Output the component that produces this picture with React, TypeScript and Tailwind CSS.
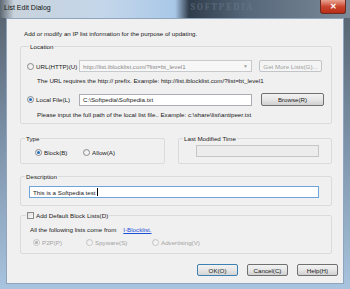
import React from 'react'

type RadioProps = {
  checked?: boolean
  disabled?: boolean
  label: string
}

function Radio({ checked, disabled, label }: RadioProps) {
  return (
    <div className="flex items-center gap-[2px] whitespace-nowrap">
      <span
        className={`flex h-[7px] w-[7px] shrink-0 items-center justify-center rounded-full border bg-gradient-to-br from-[#e6e6e6] to-[#fdfdfd] ${
          disabled ? 'border-[#c4c4c4]' : 'border-[#8a8a8a]'
        }`}
      >
        {checked && (
          <span
            className={`h-[3px] w-[3px] rounded-full ${disabled ? 'bg-[#b0b0b0]' : 'bg-[#1f6fc0]'}`}
          />
        )}
      </span>
      <span className={disabled ? 'text-[#a3a3a3]' : 'text-[#1a1a1a]'}>{label}</span>
    </div>
  )
}

function Button({ label, primary, disabled, className }: { label: string; primary?: boolean; disabled?: boolean; className: string }) {
  return (
    <div
      className={`flex items-center justify-center whitespace-nowrap rounded-[2px] border ${
        disabled
          ? 'border-[#c2c5c8] bg-[#f4f4f4] text-[#a0a0a0]'
          : primary
            ? 'border-[#3c7fb1] bg-gradient-to-b from-[#f2f2f2] via-[#e6e6e6] to-[#d4d4d4] text-[#1a1a1a]'
            : 'border-[#707070] bg-gradient-to-b from-[#f2f2f2] via-[#e6e6e6] to-[#d0d0d0] text-[#1a1a1a]'
      } ${className}`}
    >
      {label}
    </div>
  )
}

function App() {
  return (
    <div
      className="flex h-[289px] w-[350px] flex-col overflow-hidden whitespace-nowrap bg-gradient-to-b from-[#55606c] via-[#7d93aa] to-[#a9c4df] text-[6.2px] leading-[9px] text-[#1a1a1a]"
      style={{ fontFamily: '"Liberation Sans", Arial, sans-serif' }}
    >
      {/* Title bar */}
      <div className="flex h-[18px] shrink-0 items-start bg-[linear-gradient(90deg,#5d6772_0%,#c9d3dc_4%,#c3d6ea_30%,#a9c8e8_50%,#2f3c4a_54%,#56677a_70%,#6f7e8e_90%,#7c8a99_100%)]">
        <span className="ml-[4px] mt-[3px] text-[7px] text-[#111]">List Edit Dialog</span>
        <span className="ml-[140px] mt-[3px] font-serif text-[9px] font-bold tracking-[2px] text-[#6d7d8e] opacity-50">SOFTPEDIA</span>
        <div className="ml-auto mr-[4px] flex h-[14px] w-[26px] items-center justify-center rounded-b-[3px] border border-t-0 border-[#6b2a22] bg-gradient-to-b from-[#e8a393] via-[#c9462f] to-[#b82c17] text-[8px] font-bold text-white">
          ✕
        </div>
      </div>

      {/* Client area */}
      <div className="mx-[6px] mb-[5px] flex flex-1 flex-col border border-[#8ea5bd] bg-[#f0f0f0] pt-[10px] pl-[13px] pr-[5px]">
        <div className="mr-[6px] flex flex-col">
          <p className="ml-[4px]">Add or modify an IP list information for the purpose of updating.</p>

          {/* Location */}
          <fieldset className="mt-[4px] rounded-[2px] border border-[#d8dcdf] pb-[4px] pl-[6px]">
            <legend className="ml-[2px] px-[1px]">Location</legend>
            <div className="mt-[9px] flex h-[12px] items-center">
              <div className="w-[52px]">
                <Radio label="URL(HTTP)(U)" />
              </div>
              <div className="flex h-[12px] w-[173px] items-center justify-between border border-[#c7cacd] bg-[#f7f7f7] pl-[3px] pr-[3px] text-[#8a8a8a]">
                <span>http://list.iblocklist.com/?list=bt_level1</span>
                <span className="text-[5px] text-[#a0a0a0]">▼</span>
              </div>
              <Button label="Get More Lists(G)..." disabled className="ml-[7px] h-[12px] w-[63px]" />
            </div>
            <p className="ml-[10px] mt-[4px]">The URL requires the http:// prefix. Example: http://list.iblocklist.com/?list=bt_level1</p>
            <div className="mt-[8px] flex h-[13px] items-center">
              <div className="w-[52px]">
                <Radio checked label="Local File(L)" />
              </div>
              <div className="flex h-[12px] w-[173px] items-center border border-[#abadb3] bg-white pl-[3px]">
                C:\Softpedia\Softpedia.txt
              </div>
              <Button label="Browse(R)" className="ml-[9px] h-[13px] w-[63px]" />
            </div>
            <p className="ml-[10px] mt-[4px]">Please input the full path of the local list file.. Example: c:\share\list\antipeer.txt</p>
          </fieldset>

          {/* Type / Last Modified */}
          <div className="mt-[10px] flex gap-[13px]">
            <fieldset className="w-[145px] rounded-[2px] border border-[#d8dcdf] pb-[6px] pl-[14px]">
              <legend className="-ml-[10px] px-[1px]">Type</legend>
              <div className="mt-[5px] flex">
                <div className="w-[48px]">
                  <Radio checked label="Block(B)" />
                </div>
                <Radio label="Allow(A)" />
              </div>
            </fieldset>
            <fieldset className="flex-1 rounded-[2px] border border-[#d8dcdf] pb-[5px] pl-[17px]">
              <legend className="-ml-[13px] px-[1px]">Last Modified Time</legend>
              <div className="mt-[2px] h-[12px] w-[123px] border border-[#c4c6c8] bg-[#ececec]" />
            </fieldset>
          </div>

          {/* Description */}
          <fieldset className="mt-[8px] rounded-[2px] border border-[#d8dcdf] pb-[7px] pl-[8px]">
            <legend className="-ml-[4px] px-[1px]">Description</legend>
            <div className="mt-[5px] flex h-[12px] w-[290px] items-center border border-[#6ea5d8] bg-white pl-[3px]">
              This is a Softpedia test<span className="ml-[1px] h-[8px] w-px bg-black" />
            </div>
          </fieldset>

          {/* Default block lists */}
          <fieldset className="mt-[5px] rounded-[2px] border border-[#d8dcdf] pb-[6px] pl-[9px]">
            <legend className="-ml-[4px] flex items-center gap-[2px] px-[1px]">
              <span className="h-[7px] w-[7px] border border-[#8a8a8a] bg-gradient-to-br from-[#dcdcdc] to-[#fbfbfb]" />
              <span>Add Default Block Lists(D)</span>
            </legend>
            <p className="mt-[5px]">
              All the following lists come from
              <span className="ml-[7px] text-[#1a4fd8] underline">I-Blocklist.</span>
            </p>
            <div className="mt-[4px] flex pl-[3px]">
              <div className="w-[53px]">
                <Radio checked disabled label="P2P(P)" />
              </div>
              <div className="w-[66px]">
                <Radio disabled label="Spyware(S)" />
              </div>
              <Radio disabled label="Advertising(V)" />
            </div>
          </fieldset>
        </div>

        {/* Buttons */}
        <div className="mt-[10px] flex justify-end gap-[9px]">
          <Button label="OK(O)" primary className="h-[12px] w-[41px]" />
          <Button label="Cancel(C)" className="h-[12px] w-[41px]" />
          <Button label="Help(H)" className="h-[12px] w-[41px]" />
        </div>
      </div>
    </div>
  )
}

export default App
